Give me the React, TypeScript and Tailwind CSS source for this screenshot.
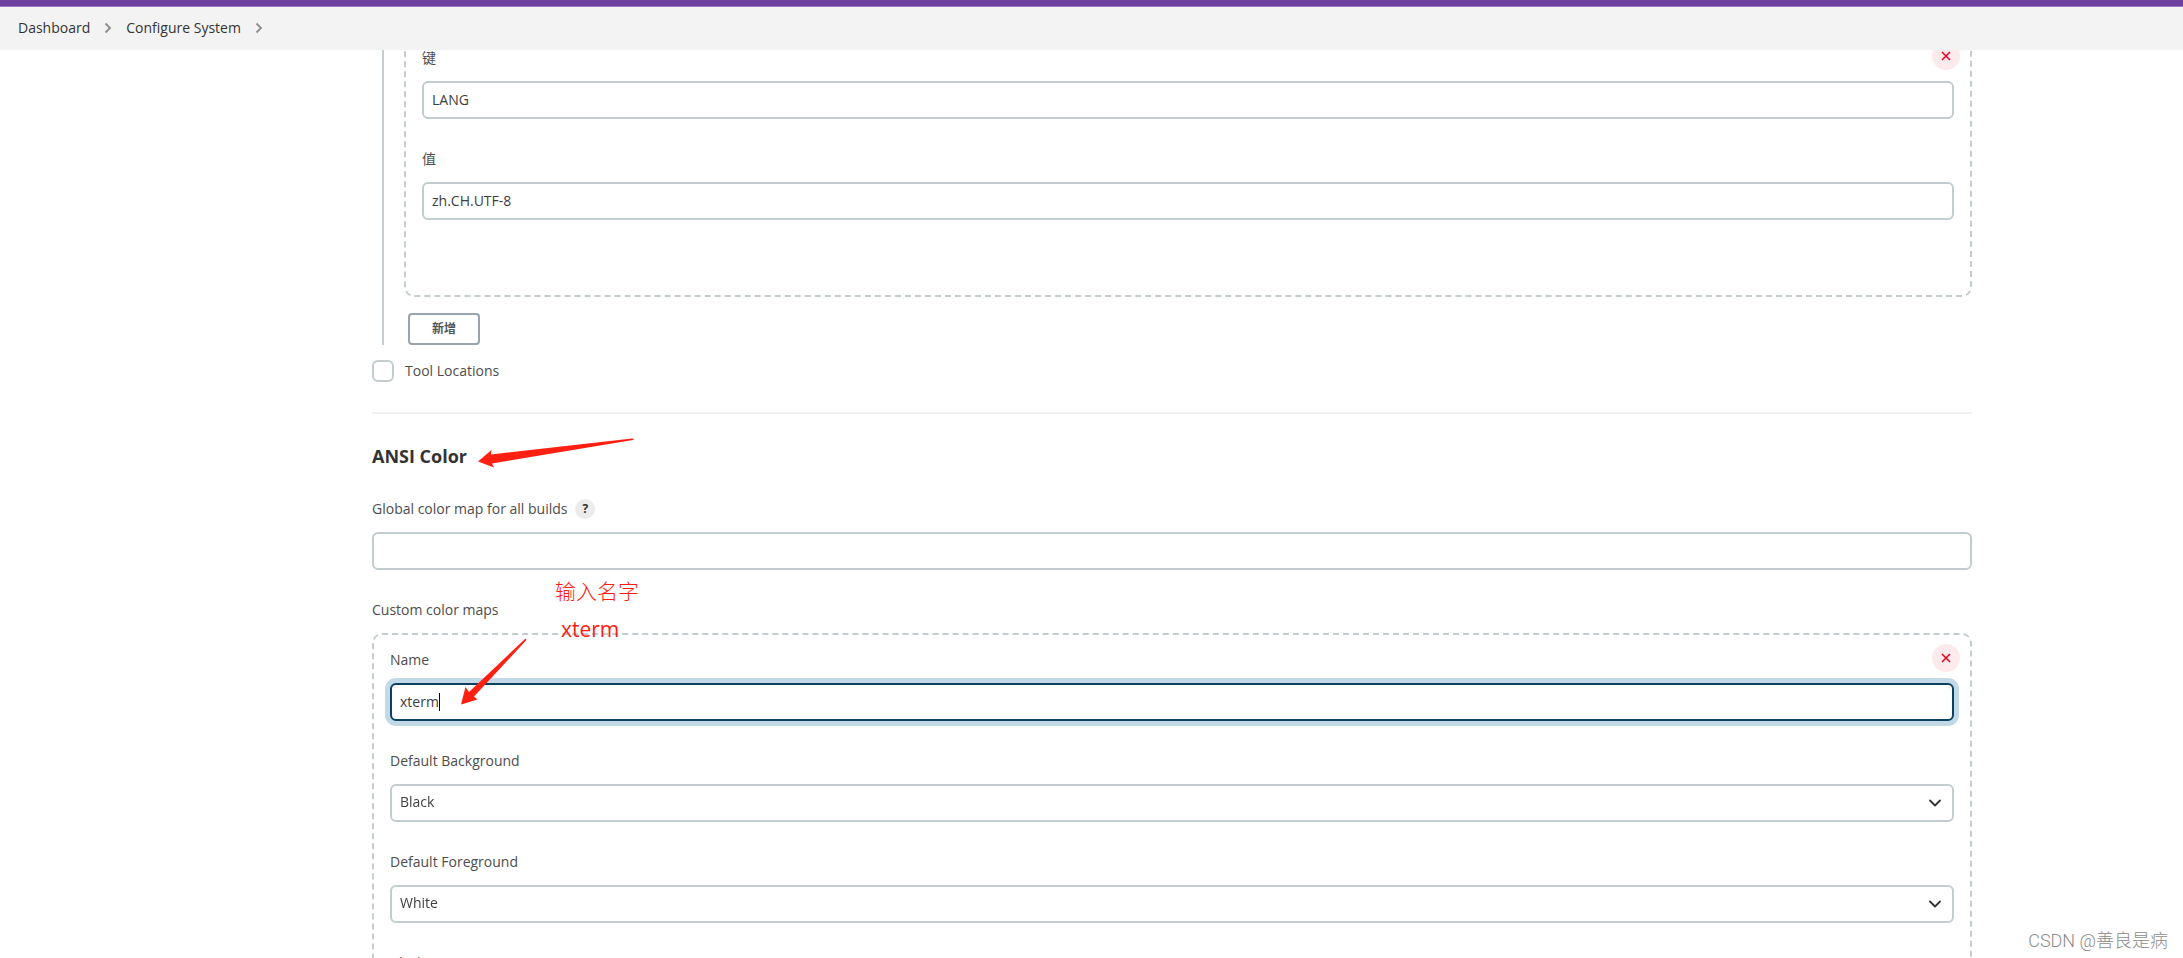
import { useEffect, useRef, useState } from "react";
import type { ReactNode } from "react";

const colors = ["Black", "Red", "Green", "Yellow", "Blue", "Magenta", "Cyan", "White"];

const controlClass =
  "block h-[38px] w-full appearance-none rounded-md border-2 border-[#c3cccf] bg-white px-2 pb-0.5 text-sm text-[#404040]";

const Field = ({ id, label, help, children }: { id: string; label: string; help?: boolean; children: ReactNode }) => (
  <div className="mb-[31px]">
    <div className="mb-[15px] flex h-[17px] items-center gap-2">
      <label htmlFor={id}>{label}</label>
      {help && (
        <button
          type="button"
          aria-label="Help"
          className="flex h-5 w-5 items-center justify-center rounded-full bg-[#ececec] text-xs font-bold text-[#333333]"
        >
          ?
        </button>
      )}
    </div>
    {children}
  </div>
);

const TextField = ({ id, label, value }: { id: string; label: string; value: string }) => (
  <Field id={id} label={label}>
    <input id={id} type="text" defaultValue={value} className={controlClass} />
  </Field>
);

const SelectField = ({ id, label, value }: { id: string; label: string; value: string }) => (
  <Field id={id} label={label}>
    <div className="relative">
      <select id={id} defaultValue={value} className={controlClass}>
        {colors.map((color) => (
          <option key={color}>{color}</option>
        ))}
      </select>
      <svg
        className="pointer-events-none absolute top-3 right-3 h-3.5 w-3.5"
        viewBox="0 0 14 14"
        fill="none"
        stroke="#333333"
        strokeWidth="1.8"
        strokeLinecap="round"
        strokeLinejoin="round"
      >
        <path d="M2 4.500l5 5 5-5" />
      </svg>
    </div>
  </Field>
);

const Chevron = () => (
  <svg className="h-3 w-2" viewBox="0 0 8 12" fill="none" stroke="#8c8c8c" strokeWidth="1.8">
    <path d="M1.5 1.5L6 6l-4.5 4.5" />
  </svg>
);

const DeleteButton = () => (
  <button
    type="button"
    aria-label="Delete"
    className="absolute top-[9px] right-2.5 flex h-7 w-7 items-center justify-center rounded-full bg-[#fdeaec]"
  >
    <svg className="h-2.5 w-2.5" viewBox="0 0 10 10" stroke="#e6001f" strokeWidth="1.5">
      <path d="M1 1l8 8M9 1L1 9" />
    </svg>
  </button>
);

// Dashed group used for every repeatable block
const Chunk = ({ className = "", children }: { className?: string; children: ReactNode }) => (
  <div className={`relative rounded-[10px] border-2 border-dashed border-[#c3cccf] px-4 pt-4 ${className}`}>
    <DeleteButton />
    {children}
  </div>
);

export default function App() {
  const [name, setName] = useState("xterm");
  const nameRef = useRef<HTMLInputElement>(null);

  useEffect(() => {
    nameRef.current?.focus();
  }, []);

  return (
    <div className="relative h-screen overflow-hidden bg-white font-['Open_Sans','Noto_Sans_CJK_SC',sans-serif] text-sm text-[#4d4d4d]">
      <header className="fixed inset-x-0 top-0 z-10 border-t-[6px] border-[#6d409f]">
        <nav className="flex h-11 items-center gap-3.5 border-t border-[#a078c8] bg-[#f3f3f3] px-[18px] pb-0.5 text-[#333333]">
          <a href="#dashboard">Dashboard</a>
          <Chevron />
          <a href="#configure">Configure System</a>
          <Chevron />
        </nav>
      </header>

      <main className="pt-[31px] pr-[211px] pl-[372px]">
        <div className="ml-2.5 border-l-2 border-[#c3cccf] pl-5">
          <Chunk className="pb-11">
            <TextField id="envKey" label="键" value="LANG" />
            <TextField id="envValue" label="值" value="zh.CH.UTF-8" />
          </Chunk>
          <button
            type="button"
            className="mt-4 ml-1 block h-8 w-[72px] rounded border-2 border-[#98a4ae] text-xs font-bold text-[#4d545d]"
          >
            新增
          </button>
        </div>

        <label className="mt-[15px] flex items-center gap-[11px]">
          <input
            type="checkbox"
            className="h-[22px] w-[22px] appearance-none rounded-md border-2 border-[#c3cccf] bg-white"
          />
          Tool Locations
        </label>

        <hr className="mt-[30px] border-t-2 border-[#f0f0f0]" />

        <h2 className="mt-7 mb-[30px] text-lg leading-7 font-bold text-[#333333]">ANSI Color</h2>

        <Field id="globalMap" label="Global color map for all builds" help>
          <input id="globalMap" type="text" className={controlClass} />
        </Field>

        <div className="mb-[15px] flex h-[17px] items-center">Custom color maps</div>
        <Chunk>
          <Field id="mapName" label="Name">
            <div className="relative">
              <input
                id="mapName"
                ref={nameRef}
                type="text"
                value={name}
                onChange={(e) => setName(e.target.value)}
                className="block h-[38px] w-full rounded-md border-2 border-[#0b4060] bg-white px-2 pb-0.5 text-sm text-[#404040] caret-transparent ring-5 ring-[#c2d9e8] outline-none"
              />
              {/* Steady caret after the typed name */}
              <span className="pointer-events-none absolute top-2.5 left-2.5 flex h-[18px] text-sm">
                <span className="invisible whitespace-pre">{name}</span>
                <span className="w-px bg-black" />
              </span>
            </div>
          </Field>
          <SelectField id="background" label="Default Background" value="Black" />
          <SelectField id="foreground" label="Default Foreground" value="White" />
          <SelectField id="black" label="Black" value="Black" />
        </Chunk>
      </main>

      {/* Annotations */}
      <svg
        className="pointer-events-none absolute top-[430px] left-[450px] z-20 h-[290px] w-[190px]"
        viewBox="0 0 190 290"
        fill="#ff2012"
      >
        <path d="M28 31.500L41.500 20 41 24.500 182 8.500Q185 9 183 10L42 33.500 44 37.500Z" />
        <path d="M11 274.500L15.500 257 19 262 75 209Q77 208 76 210.500L24 266.500 27.500 269.500Z" />
      </svg>
      <div className="absolute top-[576px] left-[555px] z-20 text-[21px] leading-[30px] font-light text-[#ff1a12]">
        输入名字
      </div>
      <div className="absolute top-[614px] left-[561px] z-20 text-[21px] leading-[30px] font-medium text-[#ff1a12]">
        xterm
      </div>

      <div className="absolute right-[15px] bottom-[3px] z-20 font-['Roboto','Noto_Sans_CJK_SC',sans-serif] text-lg font-light text-[#8c8c8c]">
        CSDN @善良是病
      </div>
    </div>
  );
}
